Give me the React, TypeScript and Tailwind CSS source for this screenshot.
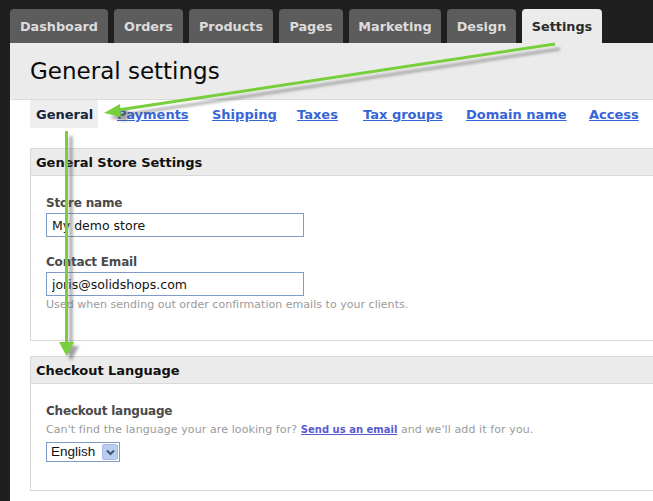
import React from "react";

const tabs = [
  { label: "Dashboard", w: "w-[98px]" },
  { label: "Orders", w: "w-[69px]" },
  { label: "Products", w: "w-[84px]" },
  { label: "Pages", w: "w-[64px]" },
  { label: "Marketing", w: "w-[92px]" },
  { label: "Design", w: "w-[69px]" },
];
const links: [string, string][] = [
  ["Payments", "w-[95px]"],
  ["Shipping", "w-[85px]"],
  ["Taxes", "w-[66px]"],
  ["Tax groups", "w-[103px]"],
  ["Domain name", "w-[123px]"],
  ["Access", "w-[60px]"],
];

function Panel({ title, bodyH, children }: { title: string; bodyH: string; children: React.ReactNode }) {
  return (
    <section className="ml-[20px] border-y border-l border-[#d8d8d8]">
      <h2 className="h-[27px] bg-[#ebebeb] border-b border-[#d8d8d8] pl-[5px] text-[13px] leading-[28px] font-bold tracking-[-0.05px] text-[#111]">
        {title}
      </h2>
      <div className={`${bodyH} pl-[15px] pt-[18px]`}>{children}</div>
    </section>
  );
}

function Field({ label, value }: { label: string; value: string }) {
  return (
    <div>
      <div className="h-[17px] text-[12px] leading-[19px] font-bold tracking-[-0.2px] text-[#4a4a4a]">{label}</div>
      <input
        readOnly
        value={value}
        className="block w-[258px] h-[24px] mt-[2px] border border-[#7d9bc4] bg-white px-[5px] text-[12.5px] text-[#111] outline-none"
      />
    </div>
  );
}

export default function App() {
  return (
    <div className="relative w-[653px] h-[501px] overflow-hidden bg-[#1f1f1f] font-['DejaVu_Sans',Verdana,sans-serif]">
      <nav className="flex gap-[6px] pl-[10px] pt-[9px] h-[43px]">
        {tabs.map((t) => (
          <div
            key={t.label}
            className={`${t.w} h-[34px] rounded-t-[4px] bg-[#5c5c5c] text-center text-[12.8px] leading-[35px] font-bold text-[#dcdcdc]`}
          >
            {t.label}
          </div>
        ))}
        <div className="w-[80px] h-[34px] rounded-t-[4px] bg-[#ebebeb] text-center text-[12.8px] leading-[35px] font-bold text-[#2a2a2a]">
          Settings
        </div>
      </nav>
      <main className="ml-[10px] h-[458px] bg-white">
        <header className="h-[57px] bg-[#ebebeb] border-b border-[#dcdcdc] pl-[20px] text-[23px] leading-[57px] text-[#0a0a0a]">
          General settings
        </header>
        <div className="flex h-[28px] pl-[20px] text-[13px] font-bold leading-[29px]">
          <div className="w-[68px] bg-[#eeeeee] pl-[6px] text-[#16233c]">General</div>
          <div className="w-[19px]" />
          {links.map(([l, w]) => (
            <a key={l} className={`${w} shrink-0 text-[#3565d8] underline`}>
              {l}
            </a>
          ))}
        </div>
        <div className="h-[20px]" />
        <Panel title="General Store Settings" bodyH="h-[164px]">
          <Field label="Store name" value="My demo store" />
          <div className="h-[16px]" />
          <Field label="Contact Email" value="joris@solidshops.com" />
          <p className="mt-[1px] text-[11px] leading-[15px] tracking-[0.03px] text-[#9a9a9a]">
            Used when sending out order confirmation emails to your clients.
          </p>
        </Panel>
        <div className="h-[15px]" />
        <Panel title="Checkout Language" bodyH="h-[106px]">
          <div className="h-[17px] text-[12px] leading-[19px] font-bold tracking-[-0.2px] text-[#4a4a4a]">Checkout language</div>
          <p className="mt-[3px] text-[11px] leading-[15px] tracking-[0.1px] text-[#9a9a9a]">
            Can't find the language your are looking for?{" "}
            <a className="text-[10px] tracking-normal font-bold text-[#5a5ad0] underline">Send us an email</a> and we'll add it for you.
          </p>
          <div className="mt-[5px] flex items-center w-[74px] h-[20px] border border-[#7d9bc4] bg-white pl-[4px] pr-[1px] font-['Liberation_Sans',Arial,sans-serif] text-[13.5px] text-[#111]">
            <span className="flex-1">English</span>
            <span className="flex items-center justify-center w-[16px] h-[16px] rounded-[2px] bg-[#b9cdf0] border border-[#a4bbe6]">
              <svg width="9" height="7" viewBox="0 0 9 7">
                <path d="M1 1.5 L4.5 5 L8 1.5" fill="none" stroke="#44537a" strokeWidth="2" />
              </svg>
            </span>
          </div>
        </Panel>
      </main>
      <svg className="absolute left-0 top-0 pointer-events-none" width="653" height="501" viewBox="0 0 653 501">
        <defs>
          <filter id="s" x="-20%" y="-20%" width="140%" height="140%">
            <feGaussianBlur stdDeviation="1.6" />
          </filter>
        </defs>
        <g filter="url(#s)" opacity="0.55" transform="translate(5 5)">
          <path d="M555 44 L118 110" stroke="#555" strokeWidth="2.5" fill="none" />
          <path d="M105 113 L123 103 L122 116 Z" fill="#555" />
          <path d="M66 131 L66 345" stroke="#555" strokeWidth="3" fill="none" />
          <path d="M59 341 L74 341 L66 356 Z" fill="#555" />
        </g>
        <path d="M555 44 L118 110" stroke="#78cf3c" strokeWidth="3" fill="none" />
        <path d="M104 113 L120 104 L121 117 Z" fill="#78cf3c" />
        <path d="M66.5 131 L66.5 345" stroke="#78cf3c" strokeWidth="3" fill="none" />
        <path d="M59 342 L74 342 L66.5 356 Z" fill="#78cf3c" />
      </svg>
    </div>
  );
}
